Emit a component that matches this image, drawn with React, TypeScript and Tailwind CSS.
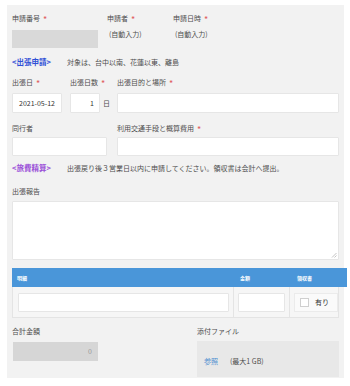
import React from 'react';

const Req = () => <span className="ml-[3px] inline-block translate-y-[2px] text-[9px] leading-none text-[#e05b5b]">*</span>;

const Label: React.FC<{ text: string; req?: boolean; className?: string }> = ({ text, req, className = '' }) => (
  <div className={`h-[10px] leading-[10px] text-[#4d4d4d] whitespace-nowrap ${className}`}>
    {text}
    {req && <Req />}
  </div>
);

const Input: React.FC<{ className?: string; children?: React.ReactNode }> = ({ className = '', children }) => (
  <div className={`bg-white border border-[#e6e6e6] rounded-[1px] text-[#333] ${className}`}>{children}</div>
);

export default function App() {
  return (
    <div
      className="w-[350px] h-[386px] bg-white pt-[5px] pl-[7px] overflow-hidden"
      style={{ fontFamily: '"Noto Sans CJK JP", "Noto Sans", sans-serif' }}
    >
      <div className="w-[337px] h-[373px] bg-[#f2f2f2] px-[5px] pt-[8px] text-[7px]">
        {/* 申請者情報 */}
        <div className="flex">
          <div className="w-[95px]">
            <Label text="申請番号" req />
            <div className="mt-[7px] h-[18px] w-[86px] bg-[#d9d9d9]" />
          </div>
          <div className="w-[66px]">
            <Label text="申請者" req />
            <div className="mt-[6px] pl-[2px] leading-[10px] text-[#4d4d4d]">(自動入力)</div>
          </div>
          <div>
            <Label text="申請日時" req />
            <div className="mt-[6px] pl-[2px] leading-[10px] text-[#4d4d4d]">(自動入力)</div>
          </div>
        </div>

        <div className="mt-[9px] flex h-[10px] leading-[10px]">
          <span className="w-[55px] text-[7.5px] font-bold text-[#2f4fd6]">&lt;出張申請&gt;</span>
          <span className="text-[#4d4d4d]">対象は、台中以南、花蓮以東、離島</span>
        </div>

        <div className="mt-[10px] flex">
          <div className="w-[58px]">
            <Label text="出張日" req />
            <Input className="mt-[6px] h-[20px] w-[50px] leading-[18px] text-center">2021-05-12</Input>
          </div>
          <div className="w-[47px]">
            <Label text="出張日数" req />
            <div className="mt-[6px] flex items-center">
              <Input className="h-[20px] w-[30px] leading-[18px] text-right pr-[5px]">1</Input>
              <span className="ml-[3px] text-[#4d4d4d]">日</span>
            </div>
          </div>
          <div className="flex-1">
            <Label text="出張目的と場所" req />
            <Input className="mt-[6px] h-[20px] w-full" />
          </div>
        </div>

        <div className="mt-[10px] flex">
          <div className="w-[105px]">
            <Label text="同行者" />
            <Input className="mt-[4px] h-[19px] w-[95px]" />
          </div>
          <div className="flex-1">
            <Label text="利用交通手段と概算費用" req />
            <Input className="mt-[4px] h-[19px] w-full" />
          </div>
        </div>

        <div className="mt-[7px] flex h-[10px] leading-[10px]">
          <span className="w-[55px] text-[7.5px] font-bold text-[#9a4fd8]">&lt;旅費精算&gt;</span>
          <span className="text-[#4d4d4d]">出張戻り後３営業日以内に申請してください。領収書は会計へ提出。</span>
        </div>

        <Label text="出張報告" className="mt-[13px]" />
        <Input className="relative mt-[5px] h-[59px] w-full">
          <svg className="absolute right-[1px] bottom-[1px]" width="6" height="6" viewBox="0 0 6 6">
            <path d="M5.5 1 L1 5.5 M5.5 3.5 L3.5 5.5" stroke="#aaa" strokeWidth="0.7" />
          </svg>
        </Input>

        {/* 明細 */}
        <div className="mt-[8px] w-[335px] h-[19px] bg-[#4a96d9] flex items-center text-[5px] font-bold text-white">
          <span className="w-[228px] pl-[5px]">明細</span>
          <span className="w-[57px]">金額</span>
          <span>領収書</span>
        </div>
        <div className="h-[31px] w-full border border-t-0 border-[#e4e4e4] bg-[#f6f6f6] flex">
          <div className="w-[223px] border-r border-[#e4e4e4] flex items-center pl-[5px]">
            <Input className="h-[19px] w-[211px]" />
          </div>
          <div className="w-[56px] border-r border-[#e4e4e4] flex items-center pl-[4px]">
            <Input className="h-[19px] w-[47px]" />
          </div>
          <div className="flex-1 flex items-center pl-[4px]">
            <div className="flex h-[19px] w-[44px] items-center bg-[#fafafa] border border-[#ebebeb] pl-[5px]">
              <span className="h-[9px] w-[9px] bg-white border border-[#cfcfcf]" />
              <span className="ml-[6px] text-[#333]">有り</span>
            </div>
          </div>
        </div>

        <div className="mt-[8px] flex">
          <div className="w-[189px]">
            <Label text="合計金額" />
            <div className="mt-[6px] ml-[1px] h-[19px] w-[85px] bg-[#d6d6d6] text-right pr-[6px] leading-[19px] text-[#999]">0</div>
          </div>
          <div className="flex-1">
            <Label text="添付ファイル" />
            <div className="mt-[5px] h-[36px] w-[142px] bg-[#e8e8e8] flex items-center pl-[7px] pt-[4px]">
              <span className="text-[#4f8fd0] w-[26px]">参照</span>
              <span className="text-[#4d4d4d]">(最大1 GB)</span>
            </div>
          </div>
        </div>
      </div>
    </div>
  );
}
